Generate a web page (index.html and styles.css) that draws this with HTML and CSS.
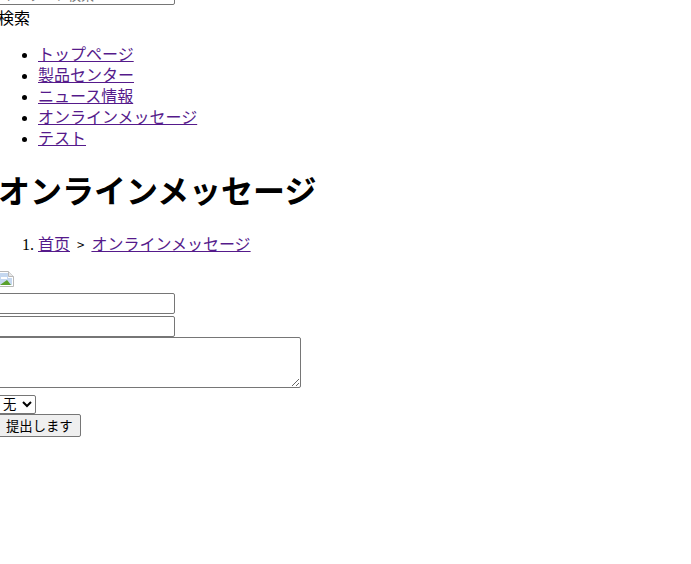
FILE: index.html
```html
<!DOCTYPE html>
<html lang="ja">
<head>
    <meta charset="UTF-8">
    <title>オンラインメッセージ</title>
    <link rel="stylesheet" href="styles.css">
</head>
<body>
    <div class="page">
        <form class="search">
            <input class="field search-field" type="text" placeholder="キーワード検索">
            <div class="search-label">検索</div>
        </form>
        <ul class="nav">
            <li><a href="#">トップページ</a></li>
            <li><a href="#">製品センター</a></li>
            <li><a href="#">ニュース情報</a></li>
            <li><a href="#">オンラインメッセージ</a></li>
            <li><a href="#">テスト</a></li>
        </ul>
        <h1>オンラインメッセージ</h1>
        <ol class="crumbs">
            <li><a href="#">首页</a><span class="sep">&gt;</span><a href="#">オンラインメッセージ</a></li>
        </ol>
        <form class="message">
            <svg class="broken" width="16" height="16" viewBox="0 0 16 16">
                <path d="M0.5 0.5H10.5L15.5 5.5V15.5H0.5Z" fill="#fff" stroke="#b8b8b8"/>
                <path d="M10.5 0.5V5.5H15.5" fill="#e8e8e8" stroke="#b8b8b8"/>
                <path d="M2 2H10V7L14 7V14H2Z" fill="#c5d8f0"/>
                <path d="M3 6H9V8H3Z" fill="#fff"/>
                <path d="M2 14L9 9L13 14Z" fill="#5aa02c"/>
            </svg>
            <input class="field" type="text">
            <input class="field" type="text">
            <textarea class="area"></textarea>
            <div class="row"><select class="pick"><option>无</option></select></div>
            <button class="submit" type="button">提出します</button>
        </form>
    </div>
</body>
</html>
```

FILE: styles.css
```css
*{
    box-sizing: border-box;
}
body{
    margin: 0;
    background-color: white;
    color: black;
    font-family: "Liberation Serif", "Noto Sans CJK JP", serif;
    font-size: 16px;
    overflow: hidden;
}
.page{
    margin: -16px 0 0 -2px;
}
a{
    color: #551a8b;
}
.field{
    display: block;
    width: 177px;
    height: 21px;
    margin-bottom: 2px;
    padding: 1px 2px;
    border: 1px solid #767676;
    border-radius: 2px;
    font-family: "Noto Sans CJK JP", sans-serif;
    font-size: 13.33px;
}
.field::placeholder{
    color: #757575;
}
.search-field{
    margin-bottom: 4px;
}
.search-label{
    line-height: 20px;
}
.nav{
    margin: 15px 0 16px;
    padding-left: 40px;
    line-height: 21px;
}
h1{
    margin: 25px 0 23px;
    font-size: 32px;
    line-height: 37px;
    font-weight: bold;
}
.crumbs{
    margin: 16px 0;
    padding-left: 40px;
    line-height: 21px;
}
.sep{
    margin: 0 7px;
    font-family: "Noto Sans CJK JP", sans-serif;
    font-size: 13.33px;
}
.broken{
    display: block;
    margin-bottom: 6px;
}
.area{
    display: block;
    width: 303px;
    height: 51px;
    margin-top: -2px;
    border: 1px solid #767676;
    border-radius: 2px;
}
.row{
    display: flex;
    margin-top: 7px;
}
.pick{
    width: 38px;
    height: 19px;
    padding: 0;
    font-family: "Liberation Sans", "Noto Sans CJK SC", sans-serif;
    font-size: 13.33px;
    background-color: white;
    border: 1px solid #767676;
    border-radius: 2px;
}
.submit{
    display: block;
    height: 23px;
    padding: 1px 7px;
    font-family: "Noto Sans CJK JP", sans-serif;
    font-size: 13.33px;
    background-color: #efefef;
    border: 1px solid #767676;
    border-radius: 2px;
}
```
